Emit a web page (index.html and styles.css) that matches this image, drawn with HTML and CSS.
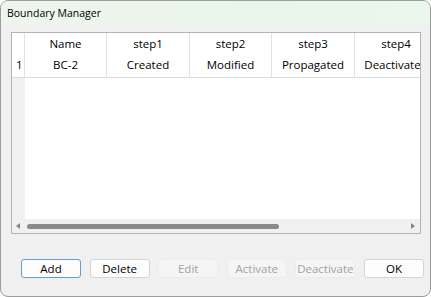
FILE: index.html
```html
<!DOCTYPE html>
<html lang="en">
<head>
  <meta charset="UTF-8">
  <title>Boundary Manager</title>
  <link rel="stylesheet" href="styles.css">
</head>
<body>

<div class="ventana">
  <div class="titulo">Boundary Manager</div>

  <div class="tabla">
    <div class="celdas">
      <div class="fila cabecera">
        <div class="c num"></div>
        <div class="c">Name</div>
        <div class="c">step1</div>
        <div class="c">step2</div>
        <div class="c">step3</div>
        <div class="c">step4</div>
      </div>
      <div class="fila datos">
        <div class="c num">1</div>
        <div class="c">BC-2</div>
        <div class="c">Created</div>
        <div class="c">Modified</div>
        <div class="c">Propagated</div>
        <div class="c">Deactivated</div>
      </div>
      <div class="vacio">
        <div class="num-vacio"></div>
      </div>
    </div>
    <div class="scroll">
      <span class="flecha izq"></span>
      <div class="pista"><div class="thumb"></div></div>
      <span class="flecha der"></span>
    </div>
  </div>

  <div class="botones">
    <button class="btn activo">Add</button>
    <button class="btn">Delete</button>
    <button class="btn" disabled>Edit</button>
    <button class="btn" disabled>Activate</button>
    <button class="btn" disabled>Deactivate</button>
    <button class="btn">OK</button>
  </div>
</div>

</body>
</html>
```

FILE: styles.css
```css
* {
  box-sizing: border-box;
}

body {
  margin: 0;
  background: #ffffff;
  font-family: 'Open Sans', 'Noto Sans', sans-serif;
  font-size: 11.5px;
  color: #000;
}

.ventana {
  width: 431px;
  height: 297px;
  border: 1px solid #9c9c9c;
  border-radius: 8px;
  background: #f0f0f0;
  overflow: hidden;
  display: flex;
  flex-direction: column;
}

.titulo {
  height: 24px;
  padding-left: 6px;
  font-size: 10.5px;
  line-height: 25px;
  background: linear-gradient(90deg, #eef5ee, #e9f5ea 60%, #eaf7ed);
}

.tabla {
  margin: 7px 0 0 10px;
  width: 410px;
  height: 202px;
  border: 1px solid #b4b4b4;
  background: #fff;
  display: flex;
  flex-direction: column;
}

.celdas {
  flex: 1;
  display: flex;
  flex-direction: column;
  overflow: hidden;
}

.fila {
  display: grid;
  grid-template-columns: 13px 82px 83px 82px 83px 83px;
  white-space: nowrap;
}

.cabecera {
  height: 21px;
  line-height: 21px;
}

.datos {
  height: 24px;
  line-height: 22px;
  border-bottom: 1px solid #dcdcdc;
}

.c {
  text-align: center;
  border-right: 1px solid #e2e2e2;
  overflow: hidden;
}

.c.num {
  text-align: left;
  padding-left: 4px;
}

.vacio {
  flex: 1;
  display: flex;
}

.num-vacio {
  width: 13px;
  background: #f0f0f0;
}

.scroll {
  height: 14px;
  background: #f0f0f0;
  display: flex;
  align-items: center;
  padding: 0 5px 0 4px;
  gap: 7px;
}

.flecha {
  width: 0;
  height: 0;
  border-top: 3px solid transparent;
  border-bottom: 3px solid transparent;
}

.flecha.izq {
  border-right: 4px solid #858585;
}

.flecha.der {
  border-left: 4px solid #858585;
}

.pista {
  flex: 1;
  height: 5px;
}

.thumb {
  width: 252px;
  height: 5px;
  border-radius: 3px;
  background: #8a8a8a;
}

.botones {
  display: flex;
  gap: 8.6px;
  margin: 25px 0 0 20px;
}

.btn {
  width: 60px;
  height: 19px;
  padding: 0;
  font-family: inherit;
  font-size: 11.5px;
  color: #000;
  background: #fdfdfd;
  border: 1px solid #d4d4d4;
  border-radius: 3px;
}

.btn.activo {
  border-color: #5f9fd6;
}

.btn:disabled {
  background: #f5f5f5;
  border-color: #ececec;
  color: #a2a2a2;
}
```
